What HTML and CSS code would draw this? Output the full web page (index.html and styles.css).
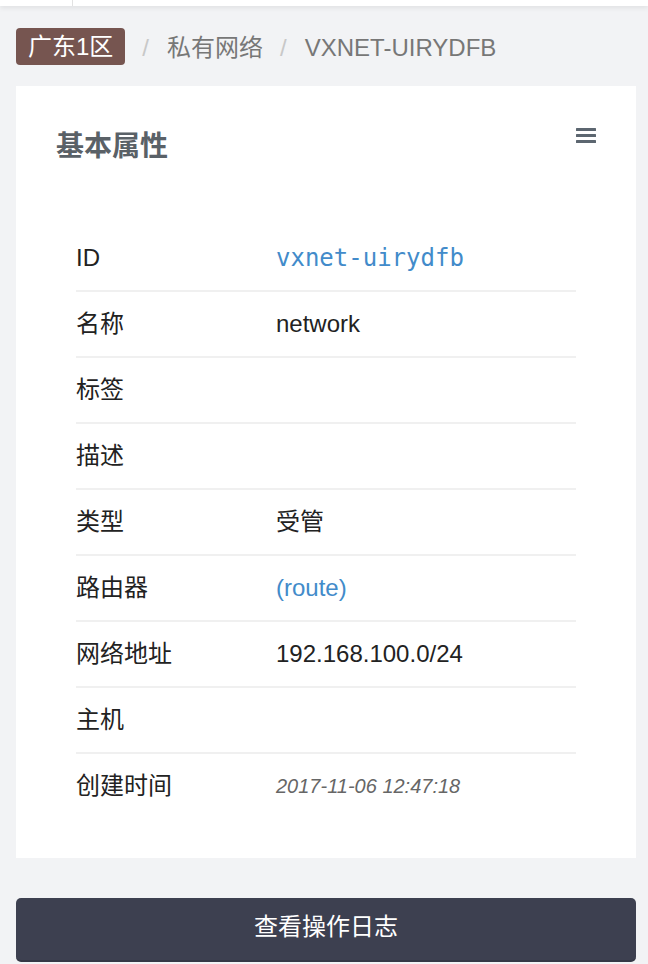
FILE: index.html
```html
<!DOCTYPE html>
<html lang="zh-CN">
<head>
<meta charset="utf-8">
<title>VXNET-UIRYDFB</title>
<link rel="stylesheet" href="styles.css">
</head>
<body>
<div class="topbar"><div class="topbar-left"></div></div>
<div class="page">
  <nav class="breadcrumb">
    <span class="zone">广东1区</span>
    <span class="sep">/</span>
    <span class="crumb">私有网络</span>
    <span class="sep">/</span>
    <span class="crumb">VXNET-UIRYDFB</span>
  </nav>
  <section class="card">
    <div class="card-head">
      <h2 class="card-title">基本属性</h2>
      <svg class="menu-icon" width="20" height="15" viewBox="0 0 20 15"><rect x="0" y="0" width="20" height="3" rx="0.5"/><rect x="0" y="6" width="20" height="3" rx="0.5"/><rect x="0" y="12" width="20" height="3" rx="0.5"/></svg>
    </div>
    <div class="props">
      <div class="row"><span class="label">ID</span><span class="value mono">vxnet-uirydfb</span></div>
      <div class="row"><span class="label">名称</span><span class="value">network</span></div>
      <div class="row"><span class="label">标签</span><span class="value"></span></div>
      <div class="row"><span class="label">描述</span><span class="value"></span></div>
      <div class="row"><span class="label">类型</span><span class="value">受管</span></div>
      <div class="row"><span class="label">路由器</span><span class="value link">(route)</span></div>
      <div class="row"><span class="label">网络地址</span><span class="value">192.168.100.0/24</span></div>
      <div class="row"><span class="label">主机</span><span class="value"></span></div>
      <div class="row"><span class="label">创建时间</span><span class="value time">2017-11-06 12:47:18</span></div>
    </div>
  </section>
  <button class="log-btn" type="button">查看操作日志</button>
</div>
</body>
</html>
```

FILE: styles.css
```css
* { box-sizing: border-box; }
html, body { margin: 0; padding: 0; }
body {
  background: #f2f3f5;
  font-family: "Liberation Sans", "Noto Sans CJK SC", sans-serif;
  color: #222;
  height: 964px;
  overflow: hidden;
}
.topbar {
  height: 6px;
  background: #fff;
  box-shadow: 0 2px 5px rgba(0, 0, 0, 0.08);
  position: relative;
}
.topbar-left {
  width: 73px;
  height: 6px;
  border-right: 1px solid #e2e2e2;
}
.page {
  margin-left: 16px;
  width: 620px;
}
.breadcrumb {
  margin-top: 22px;
  display: flex;
  align-items: center;
  height: 37px;
  font-size: 24px;
  line-height: 37px;
}
.zone {
  background: #765550;
  color: #fff;
  border-radius: 4px;
  padding: 0 12px;
  height: 37px;
}
.crumb, .sep { position: relative; top: 1px; }
.sep {
  color: #c8c8c8;
  margin: 0 18px 0 17px;
}
.crumb { color: #777; }
.card {
  margin-top: 21px;
  background: #fff;
  padding: 39px 40px 40px;
  height: 772px;
}
.card-head {
  display: flex;
  justify-content: space-between;
  align-items: flex-start;
  height: 42px;
}
.card-title {
  margin: 2px 0 0;
  font-size: 28px;
  line-height: 40px;
  font-weight: bold;
  color: #5a6167;
}
.menu-icon {
  fill: #5c6670;
  margin-top: 3px;
}
.props {
  margin-top: 59px;
  padding: 0 20px;
}
.row {
  display: flex;
  align-items: center;
  height: 66px;
  border-bottom: 2px solid #f0f0f0;
  font-size: 24px;
  line-height: 30px;
}
.row:last-child {
  border-bottom: none;
  height: 64px;
}
.label {
  width: 200px;
  color: #222;
  flex: none;
}
.value { color: #222; }
.mono {
  font-family: "DejaVu Sans Mono", "Liberation Mono", monospace;
  color: #428bca;
  font-size: 24px;
}
.link { color: #428bca; }
.time {
  font-style: italic;
  font-size: 20px;
  color: #666;
}
.log-btn {
  display: block;
  margin-top: 40px;
  width: 620px;
  height: 64px;
  border: none;
  border-bottom: 2px solid #353846;
  border-radius: 5px;
  background: #3d4050;
  color: #fff;
  font-family: "Liberation Sans", "Noto Sans CJK SC", sans-serif;
  font-size: 24px;
  line-height: 30px;
  padding: 0 0 5px;
}
```
